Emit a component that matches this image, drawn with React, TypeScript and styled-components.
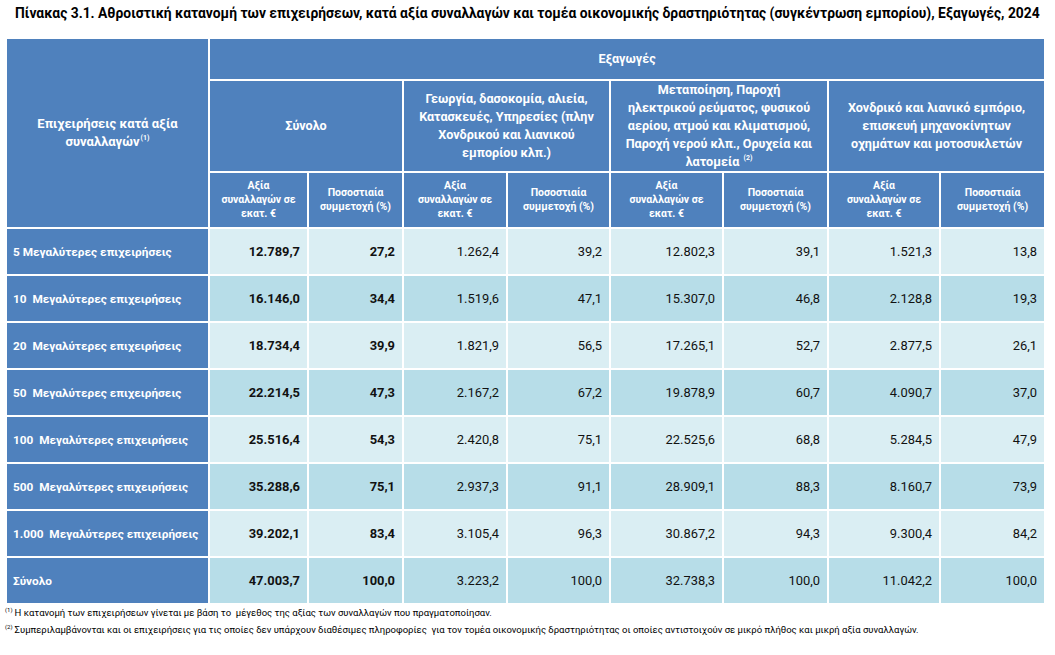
import React from "react";
import styled, { createGlobalStyle } from "styled-components";

const GlobalStyle = createGlobalStyle`
  html, body {
    margin: 0;
    padding: 0;
    background: #ffffff;
  }
  body {
    font-family: Roboto, "Liberation Sans", sans-serif;
    color: #000000;
  }
`;

const BLUE = "#4f81bd";
const LIGHT = "#daeef3";
const DARK = "#b7dde8";

const Page = styled.div`
  width: 1055px;
  padding-left: 5px;
  box-sizing: border-box;
`;

const Title = styled.h1`
  margin: 0;
  width: 1051px;
  height: 37px;
  box-sizing: border-box;
  padding: 5px 0 0 10px;
  font-size: 13.85px;
  line-height: 16px;
  font-weight: 700;
  text-align: left;
  white-space: nowrap;
`;

const Table = styled.table`
  border-collapse: separate;
  border-spacing: 2px;
  table-layout: fixed;
  width: 1041px;
`;

const Col = styled.col<{ $w: number }>`
  width: ${(p) => p.$w}px;
`;

const HeadRow = styled.tr<{ $h: number }>`
  height: ${(p) => p.$h}px;
`;

const sizes = { main: "13px", group: "12.6px", sub: "10.5px" };

const HeadCell = styled.th<{ $kind: "main" | "group" | "sub" }>`
  background: ${BLUE};
  color: #ffffff;
  text-align: center;
  vertical-align: middle;
  padding: 0 4px;
  font-weight: 700;
  font-size: ${(p) => sizes[p.$kind]};
  line-height: ${(p) => (p.$kind === "sub" ? "14px" : "18px")};
  white-space: nowrap;
`;

const Sup = styled.sup`
  font-size: 7px;
  line-height: 0;
  vertical-align: 6px;
  margin-left: 1px;
`;

const BodyRow = styled.tr<{ $dark: boolean }>`
  height: 45px;
  background: ${(p) => (p.$dark ? DARK : LIGHT)};
`;

const LabelCell = styled.td`
  background: ${BLUE};
  color: #ffffff;
  font-weight: 700;
  font-size: 11.8px;
  padding: 0 0 0 6px;
  white-space: pre;
  vertical-align: middle;
`;

const NumCell = styled.td<{ $bold?: boolean }>`
  text-align: right;
  padding: 0 7px 0 0;
  font-size: 12.9px;
  font-weight: ${(p) => (p.$bold ? 700 : 400)};
  color: #111111;
  vertical-align: middle;
`;

const Notes = styled.div`
  display: flex;
  flex-direction: column;
  gap: 5px;
  margin-top: 2px;
`;

const Note = styled.p`
  margin: 0;
  font-size: 9.5px;
  line-height: 12px;
  white-space: pre;
`;

const NoteMark = styled.sup`
  font-size: 6px;
  line-height: 0;
  vertical-align: 4px;
  margin-right: 2px;
`;

const widths = [201, 97, 93, 102, 101, 111, 103, 110, 103];

const rows: { label: string; values: string[] }[] = [
  { label: "5 Μεγαλύτερες επιχειρήσεις", values: ["12.789,7", "27,2", "1.262,4", "39,2", "12.802,3", "39,1", "1.521,3", "13,8"] },
  { label: "10  Μεγαλύτερες επιχειρήσεις", values: ["16.146,0", "34,4", "1.519,6", "47,1", "15.307,0", "46,8", "2.128,8", "19,3"] },
  { label: "20  Μεγαλύτερες επιχειρήσεις", values: ["18.734,4", "39,9", "1.821,9", "56,5", "17.265,1", "52,7", "2.877,5", "26,1"] },
  { label: "50  Μεγαλύτερες επιχειρήσεις", values: ["22.214,5", "47,3", "2.167,2", "67,2", "19.878,9", "60,7", "4.090,7", "37,0"] },
  { label: "100  Μεγαλύτερες επιχειρήσεις", values: ["25.516,4", "54,3", "2.420,8", "75,1", "22.525,6", "68,8", "5.284,5", "47,9"] },
  { label: "500  Μεγαλύτερες επιχειρήσεις", values: ["35.288,6", "75,1", "2.937,3", "91,1", "28.909,1", "88,3", "8.160,7", "73,9"] },
  { label: "1.000  Μεγαλύτερες επιχειρήσεις", values: ["39.202,1", "83,4", "3.105,4", "96,3", "30.867,2", "94,3", "9.300,4", "84,2"] },
  { label: "Σύνολο", values: ["47.003,7", "100,0", "3.223,2", "100,0", "32.738,3", "100,0", "11.042,2", "100,0"] },
];

const SubHeads = () => (
  <>
    <HeadCell $kind="sub">
      Αξία
      <br />
      συναλλαγών σε
      <br />
      εκατ. €
    </HeadCell>
    <HeadCell $kind="sub">
      Ποσοστιαία
      <br />
      συμμετοχή (%)
    </HeadCell>
  </>
);

const App = () => {
  return (
    <>
      <GlobalStyle />
      <Page>
        <Title>
          Πίνακας 3.1. Αθροιστική κατανομή των επιχειρήσεων, κατά αξία συναλλαγών και τομέα οικονομικής δραστηριότητας (συγκέντρωση εμπορίου), Εξαγωγές, 2024
        </Title>
        <Table>
          <colgroup>
            {widths.map((w, i) => (
              <Col key={i} $w={w} />
            ))}
          </colgroup>
          <thead>
            <HeadRow $h={40}>
              <HeadCell $kind="main" rowSpan={3}>
                Επιχειρήσεις κατά αξία
                <br />
                συναλλαγών<Sup>(1)</Sup>
              </HeadCell>
              <HeadCell $kind="group" colSpan={8}>
                Εξαγωγές
              </HeadCell>
            </HeadRow>
            <HeadRow $h={90}>
              <HeadCell $kind="group" colSpan={2}>
                Σύνολο
              </HeadCell>
              <HeadCell $kind="group" colSpan={2}>
                Γεωργία, δασοκομία, αλιεία,
                <br />
                Κατασκευές, Υπηρεσίες (πλην
                <br />
                Χονδρικού και λιανικού
                <br />
                εμπορίου κλπ.)
              </HeadCell>
              <HeadCell $kind="group" colSpan={2}>
                Μεταποίηση, Παροχή
                <br />
                ηλεκτρικού ρεύματος, φυσικού
                <br />
                αερίου, ατμού και κλιματισμού,
                <br />
                Παροχή νερού κλπ., Ορυχεία και
                <br />
                λατομεία <Sup>(2)</Sup>
              </HeadCell>
              <HeadCell $kind="group" colSpan={2}>
                Χονδρικό και λιανικό εμπόριο,
                <br />
                επισκευή μηχανοκίνητων
                <br />
                οχημάτων και μοτοσυκλετών
              </HeadCell>
            </HeadRow>
            <HeadRow $h={54}>
              <SubHeads />
              <SubHeads />
              <SubHeads />
              <SubHeads />
            </HeadRow>
          </thead>
          <tbody>
            {rows.map((row, i) => (
              <BodyRow key={row.label} $dark={i % 2 === 1}>
                <LabelCell>{row.label}</LabelCell>
                {row.values.map((v, j) => (
                  <NumCell key={j} $bold={j < 2}>
                    {v}
                  </NumCell>
                ))}
              </BodyRow>
            ))}
          </tbody>
        </Table>
        <Notes>
          <Note>
            <NoteMark>(1)</NoteMark>Η κατανομή των επιχειρήσεων γίνεται με βάση το  μέγεθος της αξίας των συναλλαγών που πραγματοποίησαν.
          </Note>
          <Note>
            <NoteMark>(2)</NoteMark>Συμπεριλαμβάνονται και οι επιχειρήσεις για τις οποίες δεν υπάρχουν διαθέσιμες πληροφορίες  για τον τομέα οικονομικής δραστηριότητας οι οποίες αντιστοιχούν σε μικρό πλήθος και μικρή αξία συναλλαγών.
          </Note>
        </Notes>
      </Page>
    </>
  );
};

export default App;
